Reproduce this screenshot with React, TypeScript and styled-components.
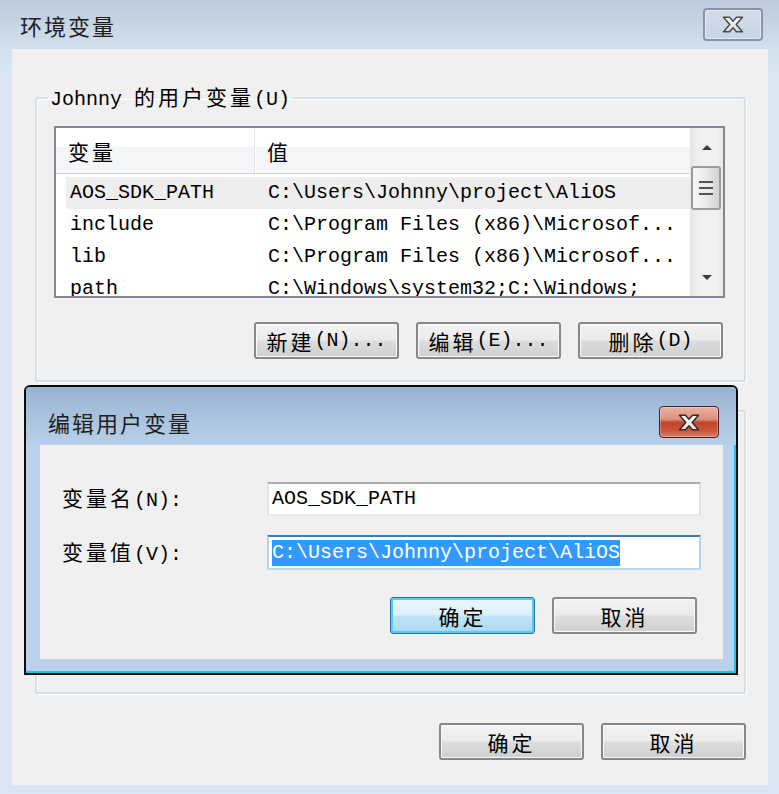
import React from "react";
import styled, { createGlobalStyle, css } from "styled-components";

const GlobalStyle = createGlobalStyle`
  html, body { margin: 0; padding: 0; background: #d9e5f2; }
  body {
    font-family: "Liberation Mono", "Noto Sans CJK SC", monospace;
    font-size: 20px;
    line-height: 24px;
    color: #000;
  }
  * { box-sizing: border-box; }
`;

const Han = styled.span`
  font-family: "Noto Sans CJK SC", sans-serif;
  font-size: 21px;
  letter-spacing: 3px;
`;

const Window = styled.div`
  position: relative;
  width: 779px;
  height: 794px;
  background: linear-gradient(#bccad9 0px, #d3e0ee 49px, #d9e5f2 70px, #d9e5f2 100%);
  display: flex;
  flex-direction: column;
  overflow: hidden;
`;

const TitleBar = styled.div`
  height: 49px;
  flex: none;
  display: flex;
  align-items: center;
  justify-content: space-between;
  padding: 0 16px 0 20px;
`;

const Caption = styled.div`
  font-family: "Noto Sans CJK SC", sans-serif;
  font-size: 22px;
  letter-spacing: 2px;
  color: #1e1e1e;
`;

const CloseButton = styled.div<{ $red?: boolean }>`
  width: 60px;
  height: 33px;
  display: flex;
  align-items: center;
  justify-content: center;
  border-radius: 4px;
  ${(p) =>
    p.$red
      ? css`
          height: 32px;
          border: 1px solid #4b1c22;
          background: linear-gradient(#eab3a5 0%, #de917e 40%, #c2452c 52%, #c9553a 80%, #dc8467 100%);
          box-shadow: inset 0 0 0 1px rgba(255, 255, 255, 0.3);
        `
      : css`
          border: 2px solid #8793ab;
          background: linear-gradient(#d3deea, #c5d4e4);
          box-shadow: inset 0 0 0 1px #e4ebf4;
        `}
`;

const XIcon = ({ light }: { light?: boolean }) => (
  <svg width="22" height="17" viewBox="0 0 22 17">
    <defs>
      <linearGradient id={light ? "xg1" : "xg2"} x1="0" y1="0" x2="0" y2="1">
        <stop offset="0" stopColor="#ffffff" />
        <stop offset="1" stopColor={light ? "#d6d6d6" : "#e2e2e2"} />
      </linearGradient>
    </defs>
    <polygon
      points="1.5,1.2 7.5,1.2 11,5.2 14.5,1.2 20.5,1.2 14.2,8.5 20.5,15.8 14.5,15.8 11,11.8 7.5,15.8 1.5,15.8 7.8,8.5"
      fill={`url(#${light ? "xg1" : "xg2"})`}
      stroke={light ? "#4a4a4a" : "#3a2a2a"}
      strokeWidth="1.5"
      strokeLinejoin="round"
    />
  </svg>
);

const Client = styled.div`
  flex: 1;
  margin: 0 11px 9px 12px;
  background: #f0f0f0;
  display: flex;
  flex-direction: column;
  padding: 35px 22px 25px 23px;
`;

const Group = styled.fieldset<{ $h: number }>`
  margin: 0;
  min-width: 0;
  height: ${(p) => p.$h}px;
  flex: none;
  border: 2px solid #d5dfe5;
  border-radius: 3px;
  box-shadow: inset 1px 1px 0 #fff, 1px 1px 0 #fff;
  padding: 14px 19px 0 17px;
  display: flex;
  flex-direction: column;
`;

const Legend = styled.legend`
  margin-left: -6px;
  padding: 0 2px;
  line-height: 24px;
`;

const List = styled.div`
  height: 172px;
  border: 2px solid #828790;
  background: #fff;
  display: flex;
  flex: none;
`;

const ListMain = styled.div`
  flex: 1;
  min-width: 0;
  display: flex;
  flex-direction: column;
  overflow: hidden;
`;

const ListHeader = styled.div`
  height: 46px;
  flex: none;
  display: grid;
  grid-template-columns: 199px 1fr;
  background: linear-gradient(#ffffff 0, #ffffff 19px, #f4f5f7 19px, #f4f5f7 100%);
  border-bottom: 1px solid #d8d8d8;
`;

const HeaderCell = styled.div<{ $sep?: boolean }>`
  display: flex;
  align-items: center;
  padding-left: 12px;
  ${(p) =>
    p.$sep &&
    css`
      border-right: 1px solid #e2e4e8;
      box-shadow: 1px 0 0 #fff;
    `}
`;

const ListBody = styled.div`
  flex: 1;
  overflow: hidden;
  padding-top: 3px;
`;

const Row = styled.div<{ $hot?: boolean }>`
  height: 32px;
  margin-left: 10px;
  display: grid;
  grid-template-columns: 202px 1fr;
  align-items: center;
  background: ${(p) => (p.$hot ? "#eeeeee" : "transparent")};
`;

const Cell = styled.div<{ $first?: boolean }>`
  white-space: nowrap;
  overflow: hidden;
  padding-left: ${(p) => (p.$first ? 4 : 0)}px;
`;

const ScrollBar = styled.div`
  width: 33px;
  flex: none;
  display: flex;
  flex-direction: column;
  border-left: 1px solid #e4e4e4;
  background: linear-gradient(to right, #e6e6e6, #f0f0f0 25%, #f2f2f2 75%, #e8e8e8);
`;

const ArrowBox = styled.div`
  height: 38px;
  flex: none;
  display: flex;
  align-items: center;
  justify-content: center;
`;

const Tri = styled.div<{ $down?: boolean }>`
  width: 0;
  height: 0;
  border-left: 5px solid transparent;
  border-right: 5px solid transparent;
  ${(p) =>
    p.$down
      ? css`border-top: 5px solid #3c3c3c;`
      : css`border-bottom: 5px solid #3c3c3c;`}
`;

const Thumb = styled.div`
  height: 44px;
  flex: none;
  margin: 0 2px 0 0;
  border: 2px solid #9c9c9c;
  border-radius: 3px;
  background: linear-gradient(to right, #f6f6f6, #e9e9e9 50%, #d2d2d2);
  display: flex;
  align-items: center;
  justify-content: center;
  padding-bottom: 12px;
`;

const Grip = styled.div`
  width: 14px;
  height: 2px;
  background: #555;
  box-shadow: 0 3px 0 #eee, 0 6px 0 #555, 0 9px 0 #eee, 0 12px 0 #555;
`;

const Track = styled.div`
  flex: 1;
`;

const ButtonRow = styled.div<{ $mt: number; $pr?: number }>`
  display: flex;
  justify-content: flex-end;
  gap: 17px;
  margin-top: ${(p) => p.$mt}px;
  padding-right: ${(p) => p.$pr ?? 0}px;
  flex: none;
`;

const Button = styled.div<{ $default?: boolean }>`
  width: 145px;
  height: 37px;
  display: flex;
  align-items: center;
  justify-content: center;
  border-radius: 3px;
  white-space: nowrap;
  ${(p) =>
    p.$default
      ? css`
          border: 1px solid #2f6f9f;
          box-shadow: inset 0 0 0 2px #55cdf3;
          background: linear-gradient(#ecf7fd 0%, #dcf0fb 48%, #c0e4f7 52%, #a9d8f2 100%);
        `
      : css`
          border: 2px solid #878787;
          box-shadow: inset 0 0 0 1px #fafafa;
          background: linear-gradient(#f3f3f3 0%, #ebebeb 48%, #dddddd 52%, #cfcfcf 100%);
        `}
`;

const Dialog = styled.div`
  position: absolute;
  left: 24px;
  top: 385px;
  width: 714px;
  height: 290px;
  border: 2px solid #0d0d0d;
  border-radius: 6px 6px 0 0;
  background: #b9d1ea;
  box-shadow: inset -2px -2px 0 #1ec6e6;
  display: flex;
  flex-direction: column;
  overflow: hidden;
`;

const DialogTitle = styled.div`
  height: 58px;
  flex: none;
  display: flex;
  align-items: center;
  justify-content: space-between;
  padding: 12px 17px 0 22px;
  background: linear-gradient(#98b3d1, #b8d0ea);
`;

const DialogFrame = styled.div`
  flex: 1;
  padding: 0 13px 14px 14px;
  display: flex;
`;

const DialogClient = styled.div`
  flex: 1;
  background: #f0f0f0;
  padding: 37px 22px 0 22px;
  display: flex;
  flex-direction: column;
`;

const Form = styled.div`
  display: grid;
  grid-template-columns: 205px 434px;
  grid-template-rows: 34px 35px;
  row-gap: 19px;
  align-items: center;
`;

const Label = styled.div`
  white-space: nowrap;
`;

const Input = styled.div<{ $focus?: boolean }>`
  height: 100%;
  display: flex;
  align-items: center;
  padding-left: 3px;
  background: #fff;
  border: 2px solid;
  white-space: nowrap;
  border-color: ${(p) =>
    p.$focus ? "#3d7bad #b5d3ea #b7d9ed #b5d3ea" : "#abadb3 #dbdfe6 #e3e9ef #e2e3ea"};
`;

const Selected = styled.span`
  background: #3399ff;
  color: #fff;
  line-height: 26px;
`;

const rows = [
  { name: "AOS_SDK_PATH", value: "C:\\Users\\Johnny\\project\\AliOS", hot: true },
  { name: "include", value: "C:\\Program Files (x86)\\Microsof..." },
  { name: "lib", value: "C:\\Program Files (x86)\\Microsof..." },
  { name: "path", value: "C:\\Windows\\system32;C:\\Windows;" },
];

export default function App() {
  return (
    <>
      <GlobalStyle />
      <Window>
        <TitleBar>
          <Caption>环境变量</Caption>
          <CloseButton>
            <XIcon light />
          </CloseButton>
        </TitleBar>
        <Client>
          <Group $h={298}>
            <Legend>
              Johnny <Han>的用户变量</Han>(U)
            </Legend>
            <List>
              <ListMain>
                <ListHeader>
                  <HeaderCell $sep>
                    <Han>变量</Han>
                  </HeaderCell>
                  <HeaderCell>
                    <Han>值</Han>
                  </HeaderCell>
                </ListHeader>
                <ListBody>
                  {rows.map((r) => (
                    <Row key={r.name} $hot={r.hot}>
                      <Cell $first>{r.name}</Cell>
                      <Cell>{r.value}</Cell>
                    </Row>
                  ))}
                </ListBody>
              </ListMain>
              <ScrollBar>
                <ArrowBox>
                  <Tri />
                </ArrowBox>
                <Thumb>
                  <Grip />
                </Thumb>
                <Track />
                <ArrowBox>
                  <Tri $down />
                </ArrowBox>
              </ScrollBar>
            </List>
            <ButtonRow $mt={24} $pr={2}>
              <Button>
                <Han>新建</Han>(N)...
              </Button>
              <Button>
                <Han>编辑</Han>(E)...
              </Button>
              <Button>
                <Han>删除</Han>(D)
              </Button>
            </ButtonRow>
          </Group>
          <Group $h={284} style={{ marginTop: 28 }} />
          <ButtonRow $mt={29}>
            <Button>
              <Han>确定</Han>
            </Button>
            <Button>
              <Han>取消</Han>
            </Button>
          </ButtonRow>
        </Client>

        <Dialog>
          <DialogTitle>
            <Caption>编辑用户变量</Caption>
            <CloseButton $red>
              <XIcon />
            </CloseButton>
          </DialogTitle>
          <DialogFrame>
            <DialogClient>
              <Form>
                <Label>
                  <Han>变量名</Han>(N):
                </Label>
                <Input>AOS_SDK_PATH</Input>
                <Label>
                  <Han>变量值</Han>(V):
                </Label>
                <Input $focus>
                  <Selected>{"C:\\Users\\Johnny\\project\\AliOS"}</Selected>
                </Input>
              </Form>
              <ButtonRow $mt={27} $pr={4}>
                <Button $default>
                  <Han>确定</Han>
                </Button>
                <Button>
                  <Han>取消</Han>
                </Button>
              </ButtonRow>
            </DialogClient>
          </DialogFrame>
        </Dialog>
      </Window>
    </>
  );
}
